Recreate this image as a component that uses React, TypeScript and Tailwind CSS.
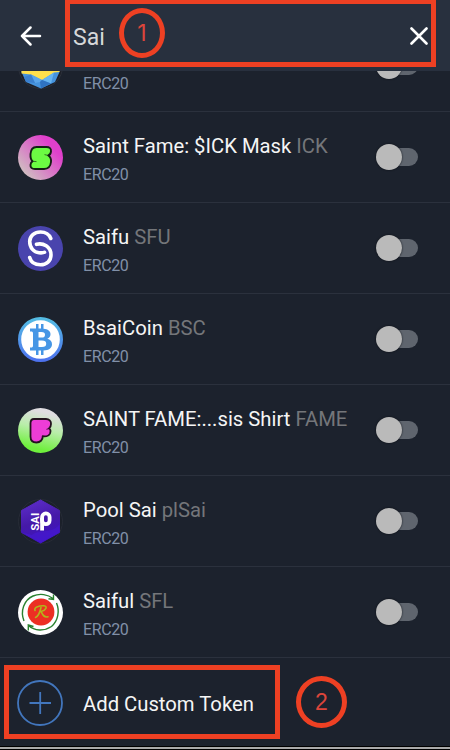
import React from "react";

function GemIcon() {
  return (
    <svg viewBox="0 0 45 45" className="h-[45px] w-[45px]">
      <circle cx="22.5" cy="22.5" r="22" fill="#1d2028" stroke="#2b303a" />
      <path d="M3.500 10H41.500V28L37 38L23 44.500L8 38L3.500 28Z" fill="#4593dd" />
      <path d="M3.500 10H41.500V28L36 28.500L24 36L13 30.500L3.500 29.500Z" fill="#ffe04c" />
      <path d="M13 30.500L24 36L22 38L17 39Z" fill="#5aa5ea" />
      <path d="M6 33L13 30.500L17 39L8 38Z" fill="#3a80cf" />
      <path d="M24 36L36 28.500L33 39.500Z" fill="#66b4f0" />
      <path d="M22 38L24 36L33 39.500L23 44.500Z" fill="#2f73c2" />
    </svg>
  );
}

function SaintIcon() {
  return (
    <svg viewBox="0 0 45 45" className="h-[45px] w-[45px]">
      <defs>
        <linearGradient id="saint" x1="0.1" y1="0.85" x2="0.75" y2="0.25">
          <stop offset="0" stopColor="#cfc0c0" />
          <stop offset="1" stopColor="#e040cc" />
        </linearGradient>
      </defs>
      <circle cx="22.5" cy="22.5" r="22.5" fill="url(#saint)" />
      <path
        d="M18.500 12H28.500C31.500 12 33.300 13.600 33 16.300C32.800 18.600 31.800 20 30.300 20.500C32.300 21.700 33.300 24 33 27C32.500 31.500 30 34 26 34H17C13.800 34 12.200 32.300 12.500 29.800C12.700 28 13.300 26.900 14.500 26.300C12.900 24.800 12.300 22.500 12.500 19C12.800 14.500 15 12 18.500 12Z"
        fill="#6cfb43" stroke="#142014" strokeWidth="1.900" strokeLinejoin="round"
      />
      <path d="M26.500 19.600L30.300 20.500M14.500 26.300L18.500 26.600" stroke="#142014" strokeWidth="0.900" opacity="0.700" />
    </svg>
  );
}

function SaifuIcon() {
  return (
    <svg viewBox="0 0 45 45" className="h-[45px] w-[45px]">
      <circle cx="22.500" cy="22.500" r="22.500" fill="#4944ad" />
      <path
        d="M32.800 12.500C31 8 27 6 22.500 6C16.500 6 11.700 10 11.700 15.500C11.700 22 16 26.300 21 26.800C23.500 27 25.300 27 26.500 26.300M18.500 18.300C25 16.500 33 20.500 33 29C33 35 28.500 38.800 22.500 38.800C17 38.800 13 36.300 11.700 31.500"
        fill="none" stroke="#fff" strokeWidth="3.600" strokeLinecap="round"
      />
    </svg>
  );
}

function BitcoinIcon() {
  return (
    <svg viewBox="0 0 45 45" className="h-[45px] w-[45px]">
      <defs>
        <linearGradient id="bsai" x1="0" y1="0" x2="0" y2="1">
          <stop offset="0" stopColor="#54bce4" />
          <stop offset="1" stopColor="#4d72ee" />
        </linearGradient>
      </defs>
      <circle cx="22.500" cy="22.500" r="20.900" fill="#fff" stroke="url(#bsai)" strokeWidth="3.200" />
      <path
        fill="#4696e5" fillRule="evenodd"
        d="M12 11.500H18V7H20.500V11.500H23V7H25.500V11.700C30 12 32.500 14 32.500 17.200C32.500 19.500 31.300 21 29.300 21.800C32.300 22.500 34 24.500 34 27.200C34 31 31 33.200 25.500 33.400V38H23V33.500H20.500V38H18V33.500H12V30.500H13C14.500 30.500 15 30 15 28.500V16.500C15 15 14.500 14.500 13 14.500H12ZM20.500 15V20.500H23.500C26 20.500 27 19.700 27 17.700C27 15.800 26 15 23.500 15ZM20.500 23.500V30H24C27 30 28.200 29 28.200 26.700C28.200 24.500 27 23.500 24 23.500Z"
      />
    </svg>
  );
}

function FameIcon() {
  return (
    <svg viewBox="0 0 45 45" className="h-[45px] w-[45px]">
      <defs>
        <linearGradient id="fame" x1="0.6" y1="0.1" x2="0.4" y2="0.9">
          <stop offset="0" stopColor="#dfdde1" />
          <stop offset="0.450" stopColor="#b9edaa" />
          <stop offset="1" stopColor="#6ff03d" />
        </linearGradient>
      </defs>
      <circle cx="22.500" cy="22.500" r="22.500" fill="url(#fame)" />
      <path
        d="M16 11H28C31 11 33.300 13 33 16C33 18 32.300 19.500 31 20.500C32.500 21 33 23 32 25.500C31 27.800 28 28.600 24.700 28.200C25 32 22 34.500 18.500 34.500C14.500 34.500 12.500 32.300 12.500 28.500V15.500C12.500 12.500 13.500 11 16 11Z"
        fill="#ed3dd6" stroke="#24131f" strokeWidth="1.800" strokeLinejoin="round"
      />
      <path d="M28.500 21.300L31 20.500" stroke="#24131f" strokeWidth="0.900" />
    </svg>
  );
}

function PoolIcon() {
  return (
    <svg viewBox="0 0 45 45" className="h-[45px] w-[45px]">
      <defs>
        <linearGradient id="pool" x1="0.3" y1="0" x2="0.6" y2="1">
          <stop offset="0" stopColor="#5c2cc8" />
          <stop offset="0.500" stopColor="#4519a8" />
          <stop offset="1" stopColor="#3d12c4" />
        </linearGradient>
      </defs>
      <circle cx="22.500" cy="22.500" r="22" fill="#1b202a" stroke="#272c37" />
      <path d="M22.500 1L41.500 11.500V33.500L22.500 44L3.500 33.500V11.500Z" fill="url(#pool)" stroke="url(#pool)" strokeLinejoin="round" />
      <path d="M3.500 33.500L22.500 44L41.500 33.500V25C36 35 20 30 14 36Z" fill="#481ad8" opacity="0.500" />
      <text transform="translate(20.800 31.700) rotate(-90)" fill="#fff" fontFamily="Roboto, sans-serif" fontWeight="700" fontSize="11" textLength="18" lengthAdjust="spacingAndGlyphs">SAI</text>
      <g fill="none" stroke="#fff" strokeWidth="3.800">
        <path d="M24.100 31.500V19" />
        <rect x="24.100" y="14.400" width="7.500" height="10.800" rx="3.700" />
      </g>
    </svg>
  );
}

function SaifulIcon() {
  return (
    <svg viewBox="0 0 45 45" className="h-[45px] w-[45px]">
      <circle cx="22.500" cy="22.500" r="22.500" fill="#fff" />
      <circle cx="23" cy="22" r="13.400" fill="#ec2f23" />
      <g fill="none" stroke="#29812f" strokeWidth="1.400">
        <path d="M6 31C2 21 6 10 15 6C22 3 30 4.500 35 8.500M35.500 4.500V9.500L30.500 8.700" />
        <path d="M38.500 13C42 21 40 31 33.500 36.500C26 41.500 16.500 41 10.500 35.500M10.300 40.500V35L15.500 36.500" />
      </g>
      <path
        d="M23 17.500C22 22 20.500 26 17.500 27.500M17 20.500C15.500 17 22 15.500 26 15.800C30 16.200 28 20.500 23 21.500C24.500 24.500 26 28 30 26.800"
        fill="none" stroke="#b3b51b" strokeWidth="1.600" strokeLinecap="round"
      />
    </svg>
  );
}

function Toggle() {
  return (
    <div className="relative mr-8 h-[26px] w-[42px] shrink-0">
      <div className="mt-1 ml-2 h-[18px] w-[34px] rounded-full bg-[#5f656e]" />
      <div className="absolute top-0 left-0 h-[26px] w-[26px] rounded-full bg-[#bababa] shadow-[0_0_2px_#0b0e14]" />
    </div>
  );
}

const tokens = [
  { name: "", symbol: "", Icon: GemIcon },
  { name: "Saint Fame: $ICK Mask", symbol: "ICK", Icon: SaintIcon },
  { name: "Saifu", symbol: "SFU", Icon: SaifuIcon },
  { name: "BsaiCoin", symbol: "BSC", Icon: BitcoinIcon },
  { name: "SAINT FAME:...sis Shirt", symbol: "FAME", Icon: FameIcon },
  { name: "Pool Sai", symbol: "plSai", Icon: PoolIcon },
  { name: "Saiful", symbol: "SFL", Icon: SaifulIcon },
];

export default function App() {
  return (
    <div className="relative flex h-[750px] w-[450px] flex-col overflow-hidden bg-[#1c222d] font-['Roboto',sans-serif] text-[#f5f5f5]">
      <header className="flex h-[71px] shrink-0 items-center bg-[#28303e] pl-5">
        <svg viewBox="0 0 22 20" className="mt-px h-5 w-[22px]" fill="none" stroke="#fff" strokeWidth="2.500" strokeLinecap="round" strokeLinejoin="round">
          <path d="M20 10H2M10.500 1.500L2 10L10.500 18.500" />
        </svg>
        <div className="ml-[31px] pt-[5px] text-[23px] leading-7 text-[#d6d7d9]">Sai</div>
        <svg viewBox="0 0 18 18" className="mt-px mr-[22px] ml-auto h-[18px] w-[18px]" fill="none" stroke="#fff" strokeWidth="2.600" strokeLinecap="round">
          <path d="M1.500 1.500L16.500 16.500M16.500 1.500L1.500 16.500" />
        </svg>
      </header>
      <main className="h-[587px] shrink-0 overflow-hidden">
        <div className="-mt-[50px]">
          {tokens.map(({ name, symbol, Icon }) => (
            <div key={symbol} className="flex h-[91px] items-center border-b border-[#2b313d] pl-[18px]">
              <Icon />
              <div className="ml-5 flex-1 pt-1 whitespace-nowrap">
                <div className="h-7 text-[20.25px] leading-7">
                  {name} <span className="text-[#74767a]">{symbol}</span>
                </div>
                <div className="mt-[3px] text-[16px] leading-6 tracking-[-0.4px] text-[#8190a8]">ERC20</div>
              </div>
              <Toggle />
            </div>
          ))}
        </div>
      </main>
      <div className="flex h-[88px] shrink-0 items-center pl-[17px]">
        <svg viewBox="0 0 46 46" className="mt-0.5 h-[46px] w-[46px]" fill="none" stroke="#4276bd" strokeWidth="1.800">
          <circle cx="23" cy="23" r="22" />
          <path d="M12.500 23H34M23.200 12V34" />
        </svg>
        <div className="ml-5 pt-1 text-[20.25px] leading-7">Add Custom Token</div>
      </div>
      <div className="h-1 shrink-0 border-t border-b border-black bg-[#aaa]" />

      <div className="absolute -top-px left-[65px] h-[68px] w-[371px] border-5 border-[#ee4023]" />
      <div className="absolute top-2 left-[119px] flex h-[50px] w-[46px] items-center justify-center rounded-[50%] border-5 border-[#ee4023] font-['Inter',sans-serif] text-[23px] leading-7 text-[#dc453b]">1</div>
      <div className="absolute top-[665px] left-1 h-[74px] w-[276px] border-5 border-[#ee4023]" />
      <div className="absolute top-[676px] left-[296px] flex h-[52px] w-[51px] items-center justify-center rounded-[50%] border-5 border-[#ee4023] font-['Liberation_Sans',sans-serif] text-[23px] leading-7 text-[#dc453b]">2</div>
    </div>
  );
}
